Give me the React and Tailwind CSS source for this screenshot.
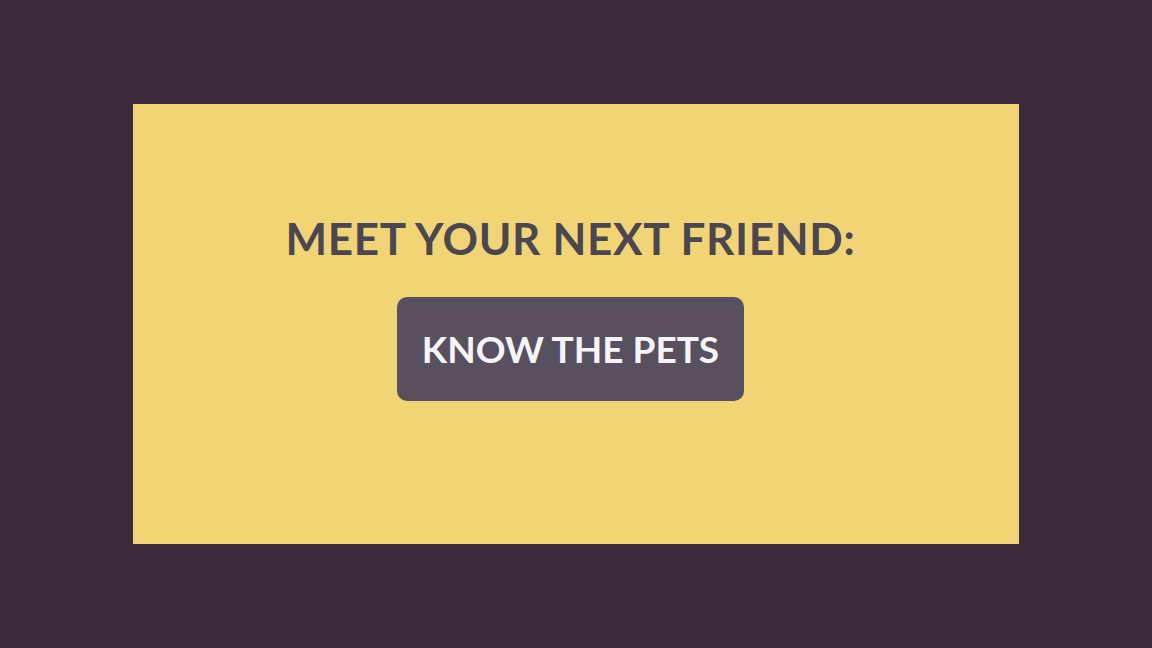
export default function App() {
  return (
    <div className="h-[648px] w-[1152px] bg-[#3a2a3b] pt-[104px] pl-[133px]" style={{ fontFamily: "Lato, 'Open Sans', sans-serif" }}>
      <div className="flex h-[440px] w-[886px] flex-col items-center bg-[#f1d575] pt-[112px] pr-[11px]">
        <h1 className="text-[44px] font-bold leading-none tracking-[0.7px] text-[#4b4652]">
          MEET YOUR NEXT FRIEND:
        </h1>
        <button className="mt-[37px] flex h-[104px] w-[347px] items-center justify-center rounded-[10px] bg-[#58505f] text-[37px] font-bold text-[#f6f4f8]">
          KNOW THE PETS
        </button>
      </div>
    </div>
  );
}
